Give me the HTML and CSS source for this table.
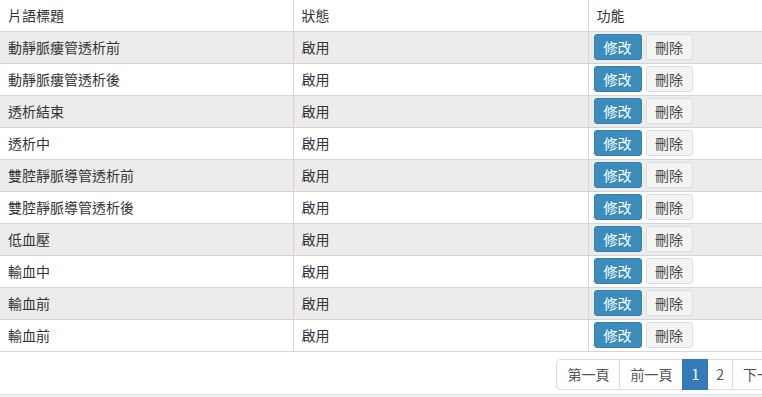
FILE: index.html
```html
<!DOCTYPE html>
<html lang="zh-Hant">
<head>
<meta charset="utf-8">
<link rel="stylesheet" href="styles.css">
</head>
<body>
<div class="wrap">
  <table class="grid">
    <colgroup><col class="c1"><col class="c2"><col class="c3"></colgroup>
    <thead>
      <tr><th>片語標題</th><th>狀態</th><th>功能</th></tr>
    </thead>
    <tbody>
      <tr><td>動靜脈瘻管透析前</td><td>啟用</td><td class="act"><button class="btn edit">修改</button><button class="btn del">刪除</button></td></tr>
      <tr><td>動靜脈瘻管透析後</td><td>啟用</td><td class="act"><button class="btn edit">修改</button><button class="btn del">刪除</button></td></tr>
      <tr><td>透析結束</td><td>啟用</td><td class="act"><button class="btn edit">修改</button><button class="btn del">刪除</button></td></tr>
      <tr><td>透析中</td><td>啟用</td><td class="act"><button class="btn edit">修改</button><button class="btn del">刪除</button></td></tr>
      <tr><td>雙腔靜脈導管透析前</td><td>啟用</td><td class="act"><button class="btn edit">修改</button><button class="btn del">刪除</button></td></tr>
      <tr><td>雙腔靜脈導管透析後</td><td>啟用</td><td class="act"><button class="btn edit">修改</button><button class="btn del">刪除</button></td></tr>
      <tr><td>低血壓</td><td>啟用</td><td class="act"><button class="btn edit">修改</button><button class="btn del">刪除</button></td></tr>
      <tr><td>輸血中</td><td>啟用</td><td class="act"><button class="btn edit">修改</button><button class="btn del">刪除</button></td></tr>
      <tr><td>輸血前</td><td>啟用</td><td class="act"><button class="btn edit">修改</button><button class="btn del">刪除</button></td></tr>
      <tr><td>輸血前</td><td>啟用</td><td class="act"><button class="btn edit">修改</button><button class="btn del">刪除</button></td></tr>
    </tbody>
  </table>
  <div class="pager">
    <ul class="pagination">
      <li><a>第一頁</a></li>
      <li><a>前一頁</a></li>
      <li class="active"><a class="num">1</a></li>
      <li><a class="num">2</a></li>
      <li><a>下一頁</a></li>
      <li><a>最後一頁</a></li>
    </ul>
  </div>
  <div class="footer-band"></div>
</div>
</body>
</html>
```

FILE: styles.css
```css
html, body {
  margin: 0;
  padding: 0;
  background: #fff;
  overflow: hidden;
}
body {
  font-family: "Noto Sans CJK TC", "Microsoft JhengHei", sans-serif;
  font-size: 14px;
  color: #333;
}
.wrap {
  width: 873px;
}
.grid {
  width: 100%;
  border-collapse: collapse;
  table-layout: fixed;
}
.grid col.c1 { width: 293px; }
.grid col.c2 { width: 295px; }
.grid th, .grid td {
  text-align: left;
  font-weight: normal;
  padding: 0 8px;
  vertical-align: middle;
  border-bottom: 1px solid #d4d4d4;
  border-left: 1px solid #d4d4d4;
  line-height: 20px;
}
.grid th:first-child, .grid td:first-child {
  border-left: none;
}
.grid tr { height: 32px; }
.grid thead tr { height: 31px; }
.grid tbody tr:nth-child(odd) {
  background: #ececec;
}
.grid td.act {
  padding-left: 5px;
  font-size: 0;
  white-space: nowrap;
}
.btn {
  display: inline-block;
  box-sizing: border-box;
  font-family: inherit;
  font-size: 14px;
  height: 26px;
  line-height: 24px;
  padding: 0;
  text-align: center;
  border-radius: 3px;
  border: 1px solid transparent;
  margin: 0;
  vertical-align: middle;
  white-space: nowrap;
  cursor: pointer;
}
.btn.edit {
  background: #3c8dbc;
  border-color: #367fa9;
  color: #fff;
  width: 48px;
}
.btn.del {
  background: #f4f4f4;
  border-color: #dddddd;
  color: #444;
  width: 47px;
  margin-left: 4px;
}
.pager {
  display: flex;
  justify-content: flex-end;
  padding-top: 7px;
  padding-bottom: 4px;
}
.pagination {
  display: flex;
  list-style: none;
  margin: 0;
  padding: 0;
}
.pagination li a {
  display: block;
  padding: 5px 10px;
  line-height: 19px;
  border: 1px solid #ddd;
  margin-left: -1px;
  color: #555;
  background: #fff;
}
.pagination li a.num {
  padding: 5px 8px;
}
.pagination li:first-child a {
  margin-left: 0;
  border-radius: 4px 0 0 4px;
}
.pagination li:last-child a {
  border-radius: 0 4px 4px 0;
}
.pagination li.active a {
  background: #337ab7;
  border-color: #337ab7;
  color: #fff;
  position: relative;
}
.footer-band {
  height: 10px;
  background: #ecf0f5;
  border-top: 1px solid #e3e3e3;
}
```
